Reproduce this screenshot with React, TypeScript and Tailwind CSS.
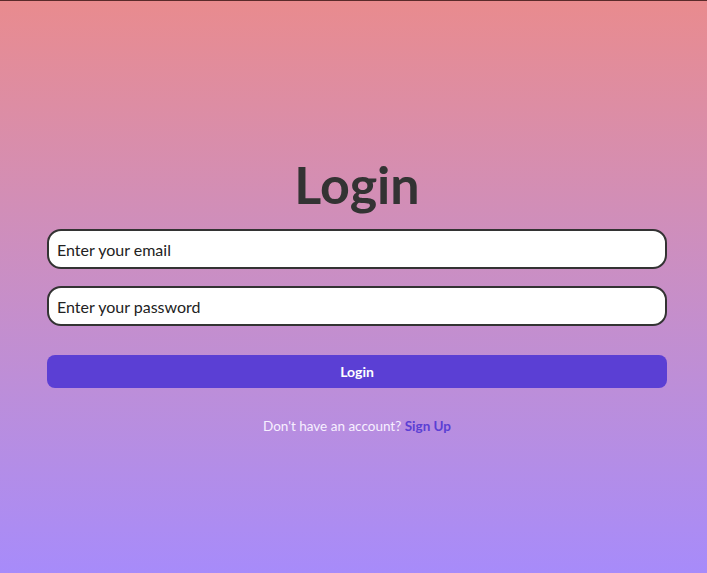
export default function App() {
  return (
    <div
      className="min-h-screen w-full border-t border-[#5a2a2a] bg-gradient-to-b from-[#e98b8e] to-[#a78bfa] flex flex-col items-center pt-[151px]"
      style={{ fontFamily: "Lato, 'Noto Sans', sans-serif" }}
    >
      <div className="w-[620px] ml-[7px] flex flex-col">
        <h1 className="text-center text-[52px] leading-[64px] font-bold text-[#333333]">Login</h1>
        <input
          type="email"
          placeholder="Enter your email"
          className="mt-[13px] h-[40px] w-full rounded-[14px] border-2 border-[#333333] bg-white px-[8px] text-[16px] text-[#222] placeholder:text-[#222] outline-none"
        />
        <input
          type="password"
          placeholder="Enter your password"
          className="mt-[17px] h-[40px] w-full rounded-[14px] border-2 border-[#333333] bg-white px-[8px] text-[16px] text-[#222] placeholder:text-[#222] outline-none"
        />
        <button className="mt-[29px] h-[33px] w-full rounded-[8px] bg-[#5b3fd4] text-[14px] font-bold text-white">
          Login
        </button>
        <p className="mt-[28px] text-center text-[13.5px] text-[#f7f0ff]">
          Don't have an account?{" "}
          <a href="#" className="font-bold text-[#5b3fd4]">
            Sign Up
          </a>
        </p>
      </div>
    </div>
  );
}
